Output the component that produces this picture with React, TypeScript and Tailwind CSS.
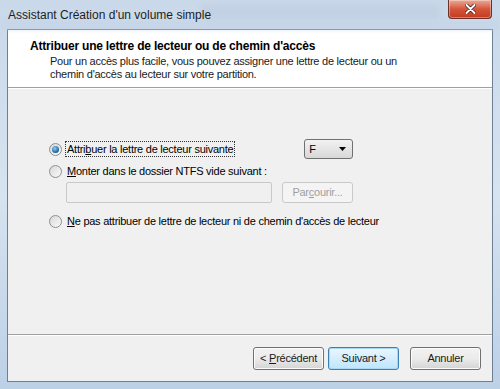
import React from "react";

function Radio({ checked }: { checked?: boolean }) {
  return (
    <span className="relative inline-flex h-[13px] w-[13px] shrink-0 items-center justify-center rounded-full border border-[#8e8f8f] bg-gradient-to-br from-[#d8d8d8] to-[#fafafa]">
      {checked && (
        <span className="h-[7px] w-[7px] rounded-full bg-[radial-gradient(circle_at_40%_35%,#8fd0f5,#1a5d99_70%)]" />
      )}
    </span>
  );
}

function Btn({ children, focus }: { children: React.ReactNode; focus?: boolean }) {
  return (
    <div
      className={`flex h-[23px] w-[71px] items-center justify-center rounded-[3px] border text-[11px] tracking-[-0.25px] text-[#1a1a1a] ${
        focus
          ? "border-[#3c7fb1] bg-gradient-to-b from-[#eaf6fd] to-[#bee6fd] shadow-[inset_0_0_0_1px_#a7d9f5]"
          : "border-[#707070] bg-gradient-to-b from-[#f2f2f2] via-[#ebebeb] to-[#d4d4d4] shadow-[inset_0_0_0_1px_#fcfcfc]"
      }`}
    >
      <span>{children}</span>
    </div>
  );
}

export default function App() {
  return (
    <div
      className="relative h-[389px] w-[500px] overflow-hidden bg-gradient-to-b from-[#c9d9ea] via-[#d6e3f0] to-[#bcd0e6] text-[11px] tracking-[-0.25px] text-black"
      style={{ fontFamily: '"Liberation Sans", Arial, sans-serif' }}
    >
      {/* faint background blur shapes in title */}
      <div className="absolute left-[200px] top-[4px] h-[16px] w-[240px] rounded bg-[#b6c6d8] opacity-40 blur-[3px]" />
      <div className="absolute left-[0px] top-[20px] h-[10px] w-[500px] bg-[#c2d3e6] opacity-50 blur-[2px]" />

      <div className="flex h-full flex-col px-[7px] pb-[7px]">
        {/* title bar */}
        <div className="relative flex h-[29px] shrink-0 items-center pl-[1px]">
          <span className="relative text-[12px] tracking-normal text-[#1e1e1e]">Assistant Création d&apos;un volume simple</span>
          <div className="absolute right-[1px] top-0 flex h-[19px] w-[44px] items-center justify-center rounded-b-[4px] border border-t-0 border-[#6d2f2a] bg-gradient-to-b from-[#eaa996] via-[#d4553a] to-[#c23a20] shadow-[inset_0_0_0_1px_rgba(255,255,255,0.35)]">
            <svg width="11" height="10" viewBox="0 0 11 10">
              <path d="M1.5 1 L9.5 9 M9.5 1 L1.5 9" stroke="#3a1410" strokeWidth="3.4" strokeLinecap="round" />
              <path d="M1.5 1 L9.5 9 M9.5 1 L1.5 9" stroke="#ffffff" strokeWidth="2" strokeLinecap="round" />
            </svg>
          </div>
        </div>

        {/* client */}
        <div className="flex min-h-0 flex-1 flex-col border border-[#6b7f95] bg-[#f0f0f0]">
          {/* header */}
          <div className="flex h-[58px] shrink-0 flex-col border-b border-[#a0a0a0] bg-white pl-[22px] pt-[9px]">
            <div className="text-[12px] font-bold leading-[15px] tracking-[-0.2px] text-black">
              Attribuer une lettre de lecteur ou de chemin d&apos;accès
            </div>
            <div className="pl-[20px] pt-[1px] leading-[13px] text-[#1a1a1a]">
              <div>Pour un accès plus facile, vous pouvez assigner une lettre de lecteur ou un</div>
              <div>chemin d&apos;accès au lecteur sur votre partition.</div>
            </div>
          </div>
          <div className="h-px bg-white" />

          {/* body */}
          <div className="flex flex-1 flex-col pl-[41px] pt-[50px]">
            <div className="flex h-[20px] items-center">
              <Radio checked />
              <span className="ml-[3px] border border-dotted border-[#333] px-[1px] leading-[14px]">
                Attri<u>b</u>uer la lettre de lecteur suivante
              </span>
              <div className="ml-[69px] flex h-[20px] w-[49px] items-center justify-between rounded-[3px] border border-[#707070] bg-gradient-to-b from-[#f2f2f2] to-[#d8d8d8] pl-[4px] pr-[6px]">
                <span>F</span>
                <svg width="7" height="4" viewBox="0 0 7 4">
                  <path d="M0 0 L7 0 L3.5 4 Z" fill="#000" />
                </svg>
              </div>
            </div>

            <div className="mt-[4px] flex h-[16px] items-center">
              <Radio />
              <span className="ml-[5px]">
                <u>M</u>onter dans le dossier NTFS vide suivant :
              </span>
            </div>

            <div className="mt-[3px] flex items-center pl-[17px]">
              <div className="h-[21px] w-[206px] rounded-[2px] border border-[#c8c8c8] bg-[#f0f0f0]" />
              <div className="ml-[10px] flex h-[21px] w-[71px] items-center justify-center rounded-[3px] border border-[#c9c9c9] bg-[#f4f4f4] text-[#a0a0a0]">
                <span>
                  Par<u>c</u>ourir...
                </span>
              </div>
            </div>

            <div className="mt-[10px] flex h-[16px] items-center">
              <Radio />
              <span className="ml-[5px]">
                <u>N</u>e pas attribuer de lettre de lecteur ni de chemin d&apos;accès de lecteur
              </span>
            </div>
          </div>

          {/* footer */}
          <div className="h-px bg-[#a0a0a0]" />
          <div className="h-px bg-white" />
          <div className="flex h-[45px] shrink-0 items-start justify-end pr-[11px] pt-[11px]">
            <Btn>
              &lt; <u>P</u>récédent
            </Btn>
            <div className="ml-[4px]">
              <Btn focus>Suivant &gt;</Btn>
            </div>
            <div className="ml-[11px]">
              <Btn>Annuler</Btn>
            </div>
          </div>
        </div>
      </div>
    </div>
  );
}
